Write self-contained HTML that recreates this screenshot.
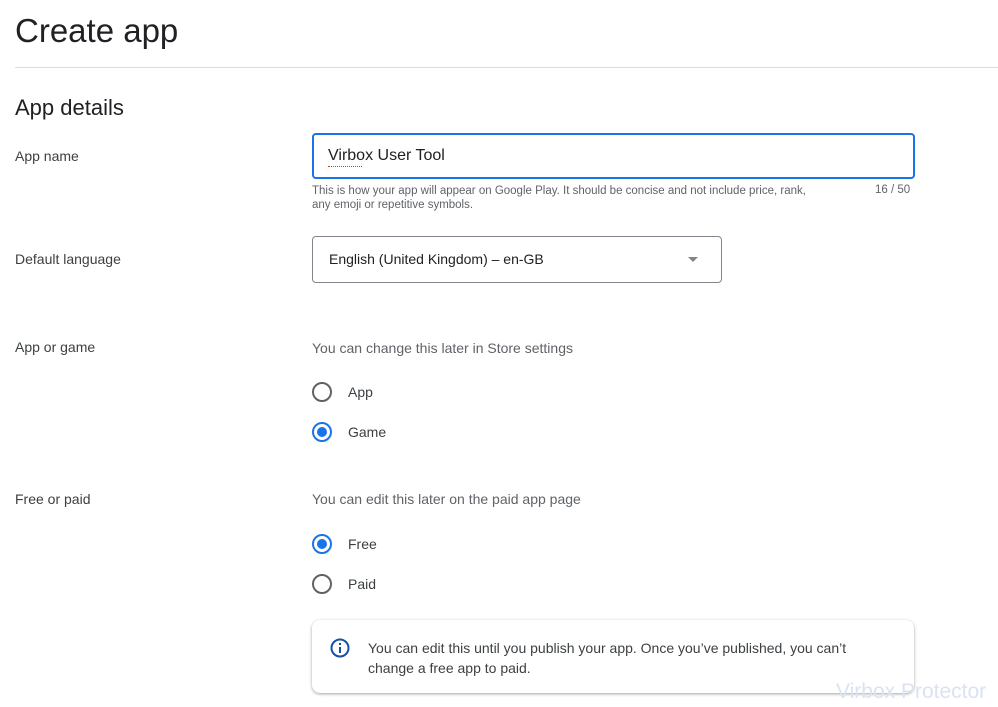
<!DOCTYPE html>
<html><head><style>
body{margin:0;width:998px;height:707px;background:#fff;font-family:"Liberation Sans",sans-serif;color:#202124;position:relative;overflow:hidden}
.a{position:absolute;white-space:nowrap}
.lbl{font-size:14px;color:#3c4043}
.radio{position:absolute;width:16px;height:16px;border:2px solid #5f6368;border-radius:50%}
.radio.on{border-color:#1a73e8}
.radio.on::after{content:"";position:absolute;left:3px;top:3px;width:10px;height:10px;border-radius:50%;background:#1a73e8}
</style></head><body>
<div class="a" style="left:15px;top:12px;font-size:33px;color:#202124">Create app</div>
<div class="a" style="left:15px;top:67px;width:983px;height:1px;background:#dadce0"></div>
<div class="a" style="left:15px;top:95px;font-size:22px">App details</div>

<div class="a lbl" style="left:15px;top:148px">App name</div>
<div class="a" style="left:312px;top:133px;width:599px;height:42px;border:2px solid #1a73e8;border-radius:4px"></div>
<div class="a" style="left:328px;top:147px;font-size:16px">Virbox User Tool</div>
<div class="a" style="left:328px;top:166px;width:34px;border-bottom:1px dotted #d93025"></div>
<div class="a" style="left:312px;top:184px;font-size:11.5px;color:#5f6368;line-height:14px">This is how your app will appear on Google Play. It should be concise and not include price, rank,<br>any emoji or repetitive symbols.</div>
<div class="a" style="left:875px;top:184px;font-size:11.5px;color:#5f6368">16 / 50</div>

<div class="a lbl" style="left:15px;top:251px">Default language</div>
<div class="a" style="left:312px;top:236px;width:408px;height:45px;border:1px solid #80868b;border-radius:4px"></div>
<div class="a" style="left:329px;top:251px;font-size:14px">English (United Kingdom) – en-GB</div>
<div class="a" style="left:688px;top:257px;width:0;height:0;border-left:5px solid transparent;border-right:5px solid transparent;border-top:5px solid #80868b"></div>

<div class="a lbl" style="left:15px;top:339px">App or game</div>
<div class="a lbl" style="left:312px;top:340px;color:#5f6368">You can change this later in Store settings</div>
<div class="radio" style="left:312px;top:382px"></div>
<div class="a lbl" style="left:348px;top:384px">App</div>
<div class="radio on" style="left:312px;top:422px"></div>
<div class="a lbl" style="left:348px;top:424px">Game</div>

<div class="a lbl" style="left:15px;top:491px">Free or paid</div>
<div class="a lbl" style="left:312px;top:491px;color:#5f6368">You can edit this later on the paid app page</div>
<div class="radio on" style="left:312px;top:534px"></div>
<div class="a lbl" style="left:348px;top:536px">Free</div>
<div class="radio" style="left:312px;top:574px"></div>
<div class="a lbl" style="left:348px;top:576px">Paid</div>

<div class="a" style="left:312px;top:620px;width:602px;height:73px;border-radius:8px;box-shadow:0 1px 3px rgba(60,64,67,.35),0 1px 2px rgba(60,64,67,.15)"></div>
<svg class="a" style="left:330px;top:638px" width="20" height="20" viewBox="0 0 20 20"><circle cx="10" cy="10" r="8.5" fill="none" stroke="#174ea6" stroke-width="2"/><rect x="9" y="9" width="2" height="6" fill="#174ea6"/><rect x="9" y="5" width="2" height="2" fill="#174ea6"/></svg>
<div class="a" style="left:368px;top:638px;font-size:14px;line-height:20px;color:#3c4043">You can edit this until you publish your app. Once you’ve published, you can’t<br>change a free app to paid.</div>
<div class="a" style="left:836px;top:680px;font-size:21px;color:#dbe3f3">Virbox Protector</div>
</body></html>
